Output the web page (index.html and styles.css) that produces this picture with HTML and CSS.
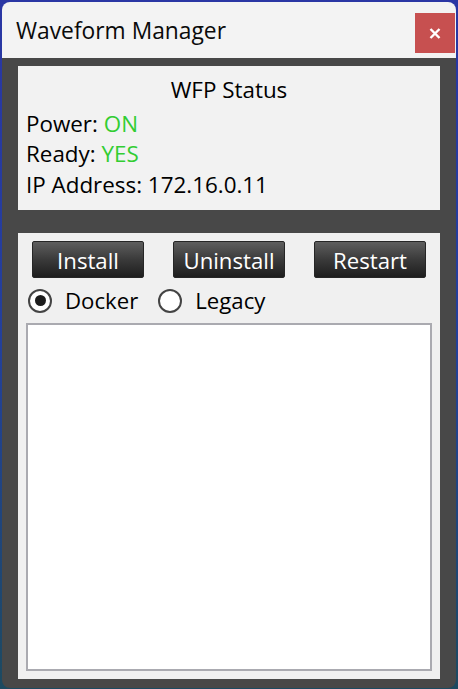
FILE: index.html
```html
<!DOCTYPE html>
<html lang="en">
<head>
<meta charset="utf-8">
<title>Waveform Manager</title>
<link rel="stylesheet" href="styles.css">
</head>
<body>
<div class="window">
  <div class="titlebar">
    <div class="title">Waveform Manager</div>
    <button class="close" aria-label="Close">
      <svg width="12" height="11" viewBox="0 0 12 11"><path d="M1.5 1 L10.5 10 M10.5 1 L1.5 10" stroke="#ffffff" stroke-width="2.4" fill="none"/></svg>
    </button>
  </div>
  <div class="content">
    <div class="status">
      <div class="status-title">WFP Status</div>
      <div class="status-line">Power: <span class="ok">ON</span></div>
      <div class="status-line">Ready: <span class="ok">YES</span></div>
      <div class="status-line">IP Address: 172.16.0.11</div>
    </div>
    <div class="controls">
      <div class="buttons">
        <button class="btn">Install</button>
        <button class="btn">Uninstall</button>
        <button class="btn">Restart</button>
      </div>
      <div class="radios">
        <label class="radio"><input type="radio" name="mode" checked><span>Docker</span></label>
        <label class="radio"><input type="radio" name="mode"><span>Legacy</span></label>
      </div>
      <textarea class="log"></textarea>
    </div>
  </div>
</div>
</body>
</html>
```
FILE: styles.css
```css
html, body {
  margin: 0;
  padding: 0;
}
body {
  width: 458px;
  height: 689px;
  overflow: hidden;
  background: linear-gradient(to bottom, #2a36a4 0%, #23409a 50%, #1d4a60 100%);
  font-family: "Open Sans", "Noto Sans", sans-serif;
  color: #000;
}
.window {
  margin: 2px 0 0 2px;
  width: 454px;
  height: 686px;
  border-radius: 8px;
  overflow: hidden;
  display: flex;
  flex-direction: column;
}
.titlebar {
  height: 56px;
  flex: none;
  background: #f3f3f3;
  display: flex;
  justify-content: space-between;
  align-items: flex-start;
  padding-left: 14px;
}
.title {
  font-size: 22.8px;
  line-height: 31px;
  margin-top: 12.5px;
  color: #0a0a0a;
}
.close {
  width: 40px;
  height: 40px;
  margin: 11px 1px 0 0;
  border: none;
  padding: 0;
  background: #c75050;
  display: flex;
  align-items: center;
  justify-content: center;
}
.content {
  flex: 1;
  background: #484848;
  padding: 8px 16px 9px;
  display: flex;
  flex-direction: column;
  gap: 23px;
}
.status {
  height: 144px;
  flex: none;
  box-sizing: border-box;
  background: #f2f2f2;
  padding: 9px 8px 0;
  font-size: 22.4px;
}
.status-title {
  text-align: center;
  line-height: 30.5px;
  margin-bottom: 3px;
}
.status-line {
  line-height: 30.5px;
}
.ok {
  color: #32cd32;
}
.controls {
  flex: 1;
  background: #f0f0f0;
  padding: 8px;
  display: flex;
  flex-direction: column;
}
.buttons {
  display: flex;
  justify-content: space-between;
  padding: 0 6px;
}
.btn {
  width: 112px;
  height: 37px;
  box-sizing: border-box;
  padding: 2px 0 0;
  border: 1px solid #262626;
  border-radius: 2px;
  background: linear-gradient(to bottom, #5e5e5e 0%, #3a3a3a 50%, #1e1e1e 100%);
  color: #ffffff;
  font-family: "Open Sans", "Noto Sans", sans-serif;
  font-size: 22.2px;
  line-height: 33px;
}
.radios {
  height: 45px;
  display: flex;
  align-items: center;
  padding-left: 2px;
  font-size: 22.2px;
  line-height: 30px;
}
.radio {
  display: flex;
  align-items: center;
  gap: 13px;
  margin-right: 20px;
}
.radio input {
  appearance: none;
  -webkit-appearance: none;
  margin: 0;
  width: 24px;
  height: 24px;
  box-sizing: border-box;
  border: 2px solid #444444;
  border-radius: 50%;
  background: #ffffff;
  display: flex;
  align-items: center;
  justify-content: center;
}
.radio input:checked::after {
  content: "";
  width: 11px;
  height: 11px;
  border-radius: 50%;
  background: #1c1c1c;
}
.log {
  flex: 1;
  resize: none;
  border: 2px solid #aaaab0;
  background: #ffffff;
  margin: 0;
  padding: 0;
  outline: none;
}
```
